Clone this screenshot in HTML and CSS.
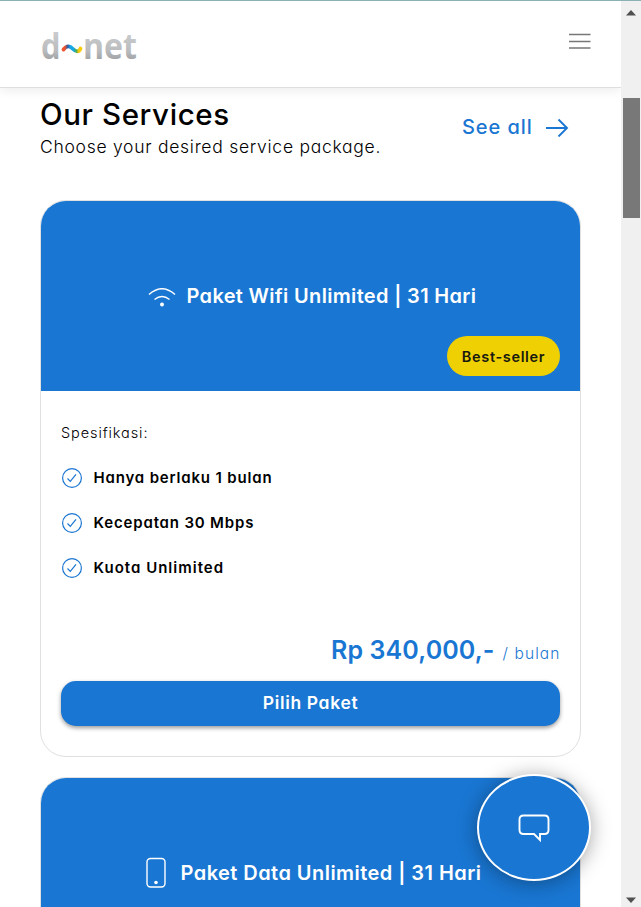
FILE: index.html
```html
<!DOCTYPE html>
<html lang="id">
<head>
<meta charset="utf-8">
<title>d~net</title>
<link rel="stylesheet" href="styles.css">
</head>
<body>
<div class="window">
  <div class="page">
    <header class="topbar">
      <svg class="logo" width="110" height="60" viewBox="-1 -12 110 60" role="img" aria-label="d~net">
        <defs>
          <linearGradient id="silver" x1="0" y1="0" x2="0" y2="1">
            <stop offset="0.2" stop-color="#cbcdce"/><stop offset="0.6" stop-color="#babcbe"/><stop offset="0.85" stop-color="#999b9e"/>
          </linearGradient>
          <linearGradient id="wave" x1="0" y1="0" x2="1" y2="0">
            <stop offset="0.08" stop-color="#f0532d"/><stop offset="0.25" stop-color="#285aa8"/><stop offset="0.4" stop-color="#1ba5ea"/><stop offset="0.6" stop-color="#16a8e0"/><stop offset="0.76" stop-color="#55ad45"/><stop offset="0.9" stop-color="#fccb0a"/>
          </linearGradient>
        </defs>
        <g class="logo-text" fill="url(#silver)">
          <text x="-1" y="31" textLength="19.500" lengthAdjust="spacingAndGlyphs">d</text>
          <text x="41" y="31" textLength="54" lengthAdjust="spacingAndGlyphs">net</text>
        </g>
        <path d="M21.500 21.500C25 17 28 18 31 21C34 24 37 24.500 38.500 20.500" fill="none" stroke="url(#wave)" stroke-width="3.800" stroke-linecap="round"/>
      </svg>
      <svg class="menu" width="24" height="18" viewBox="0 0 24 18"><path d="M1 2.500H22.500M1 9.500H22.500M1 16H22.500" stroke="#777" stroke-width="1.500"/></svg>
    </header>
    <main class="content">
      <section class="intro">
        <div>
          <h1 class="title">Our Services</h1>
          <p class="subtitle">Choose your desired service package.</p>
        </div>
        <a class="see-all"><span>See all</span>
          <svg width="24" height="20" viewBox="0 0 24 20"><path d="M1 11H22M13.500 2.500L22 11L13.500 19.500" fill="none" stroke="#1976d2" stroke-width="1.900"/></svg>
        </a>
      </section>
      <article class="card">
        <div class="banner">
          <h2 class="heading wifi">
            <svg class="signal" width="28" height="20" viewBox="0 0 28 20"><path d="M1 6.500Q14 -5 27 6.500M6.500 11.500Q14 5.500 21.500 11.500" fill="none" stroke="#fff" stroke-width="1.500"/><circle cx="14" cy="16.500" r="2" fill="#fff"/></svg>
            <span>Paket Wifi Unlimited | 31 Hari</span>
          </h2>
          <span class="badge">Best-seller</span>
        </div>
        <div class="details">
          <p class="label">Spesifikasi:</p>
          <ul class="specs">
            <li><svg class="check" viewBox="0 0 22 22"><circle cx="11" cy="11" r="9.400"/><path d="M6.500 11.500L9.300 14.300L15 7.300"/></svg><span>Hanya berlaku 1 bulan</span></li>
            <li><svg class="check" viewBox="0 0 22 22"><circle cx="11" cy="11" r="9.400"/><path d="M6.500 11.500L9.300 14.300L15 7.300"/></svg><span>Kecepatan 30 Mbps</span></li>
            <li><svg class="check" viewBox="0 0 22 22"><circle cx="11" cy="11" r="9.400"/><path d="M6.500 11.500L9.300 14.300L15 7.300"/></svg><span class="quota">Kuota Unlimited</span></li>
          </ul>
          <p class="price"><strong>Rp 340,000,-</strong><span>/ bulan</span></p>
          <button class="choose"><span>Pilih Paket</span></button>
        </div>
      </article>
      <article class="card">
        <div class="banner">
          <h2 class="heading data">
            <svg width="20" height="32" viewBox="0 0 20 32"><rect x="1" y="1.500" width="18" height="28.500" rx="3.500" fill="none" stroke="#fff" stroke-width="1.400"/><circle cx="10" cy="25.500" r="1.800" fill="#fff"/></svg>
            <span>Paket Data Unlimited | 31 Hari</span>
          </h2>
        </div>
      </article>
    </main>
  </div>
  <div class="scrollbar">
    <svg width="10" height="6" viewBox="0 0 10 6"><path d="M0 5.500L5 0L10 5.500Z" fill="#505050"/></svg>
    <div class="thumb"></div>
    <svg width="10" height="6" viewBox="0 0 10 6"><path d="M0 .5L5 6L10 .5Z" fill="#505050"/></svg>
  </div>
</div>
<button class="chat" aria-label="Chat">
  <svg width="32" height="28" viewBox="0 0 32 28"><path d="M5.500 1.500H26.500Q30.500 1.500 30.500 5.500V16Q30.500 20 26.500 20H22V26L16 20H5.500Q1.500 20 1.500 16V5.500Q1.500 1.500 5.500 1.500Z" fill="none" stroke="#fff" stroke-width="1.900"/></svg>
</button>
</body>
</html>
```
FILE: styles.css
```css
* { box-sizing: border-box; margin: 0; padding: 0; }
body {
  height: 907px; overflow: hidden; background: #fff; color: #000;
  font-family: Inter, "Open Sans", sans-serif; font-feature-settings: "cv11";
}
span, h1, p, strong { white-space: nowrap; }
.window { display: flex; height: 907px; border-top: 1px solid #8bb0b5; }
.page { width: 621px; overflow: hidden; }
.topbar {
  display: flex; justify-content: space-between; align-items: flex-start;
  height: 87px; padding: 15px 29px 0 41px;
  border-bottom: 1px solid #dedede; box-shadow: 0 3px 10px rgba(0,0,0,.07);
}
.logo { display: block; }
.logo-text { font: 700 36px "Open Sans", sans-serif; }
.menu { margin-top: 16px; }
.content { padding: 0 40px; }
.intro { display: flex; justify-content: space-between; height: 112px; padding-top: 7px; }
.title { font-size: 29.5px; font-weight: 450; line-height: 38px; letter-spacing: .6px; }
.subtitle { margin-top: 1px; font-size: 17.5px; font-weight: 300; line-height: 26px; letter-spacing: .73px; }
.see-all {
  display: flex; align-items: center; gap: 12px; width: 118px; height: 63px;
  margin-right: 1px; color: #1976d2; font-size: 20px; font-weight: 500; letter-spacing: .95px;
}
.card {
  height: 557px; margin-bottom: 20px; border: 1px solid #e0e0e0;
  border-radius: 26px; overflow: hidden; background: #fff;
}
.banner {
  display: flex; flex-direction: column; align-items: flex-end;
  height: 190px; padding: 80px 20px 15px; background: #1976d2;
}
.heading {
  display: flex; align-items: center; align-self: stretch; justify-content: flex-start;
  height: 30px; color: #fff; font-size: 20px; font-weight: 570; line-height: 30px;
}
.wifi { padding-left: 87px; gap: 10.5px; letter-spacing: .33px; }
.signal { margin-top: 3px; }
.data { padding-left: 85px; gap: 14.5px; letter-spacing: .45px; }
.badge {
  width: 113px; height: 40px; margin-top: 25px; border-radius: 20px;
  background: #efd002; color: #191a10; font-size: 14.5px; font-weight: 570;
  line-height: 41px; text-align: center; letter-spacing: .65px;
}
.details { padding: 30px 20px; }
.label { font-size: 14.5px; font-weight: 300; line-height: 23px; letter-spacing: .9px; }
.specs { list-style: none; margin-top: 11px; }
.specs li { display: flex; align-items: center; gap: 10.5px; height: 45px; font-size: 15px; font-weight: 600; letter-spacing: .83px; }
.specs .quota { letter-spacing: 1px; }
.check { width: 22px; height: 22px; fill: none; stroke: #1976d2; stroke-width: 1.2; }
.price {
  display: flex; justify-content: flex-end; align-items: baseline; gap: 8px;
  height: 38px; margin-top: 42px; color: #1976d2; line-height: 36px;
}
.price strong { font-size: 25px; font-weight: 600; letter-spacing: .1px; }
.price span { font-size: 15.5px; font-weight: 300; letter-spacing: 1.1px; margin-right: -.5px; }
.choose {
  display: block; width: 100%; height: 45px; margin-top: 11px; border: 0; border-radius: 15px;
  background: #1976d2; color: #fff; font: inherit; font-size: 17.5px; font-weight: 570;
  line-height: 43px; letter-spacing: .65px; box-shadow: 0 2px 4px rgba(0,0,0,.4);
}
.choose span { display: block; height: 45px; }
.scrollbar {
  display: flex; flex-direction: column; align-items: center;
  width: 20px; padding: 9px 0 4px 0; background: #f0f0f0;
}
.thumb { width: 17px; height: 120px; margin: 82px 0 auto 1px; background: #787878; }
.chat {
  position: absolute; right: 50px; bottom: 26px; display: flex; align-items: center; justify-content: center;
  width: 114px; height: 107px; border: 2px solid #fff; border-radius: 50%;
  background: #1976d2; box-shadow: 0 2px 20px rgba(0,0,0,.35);
}
```
